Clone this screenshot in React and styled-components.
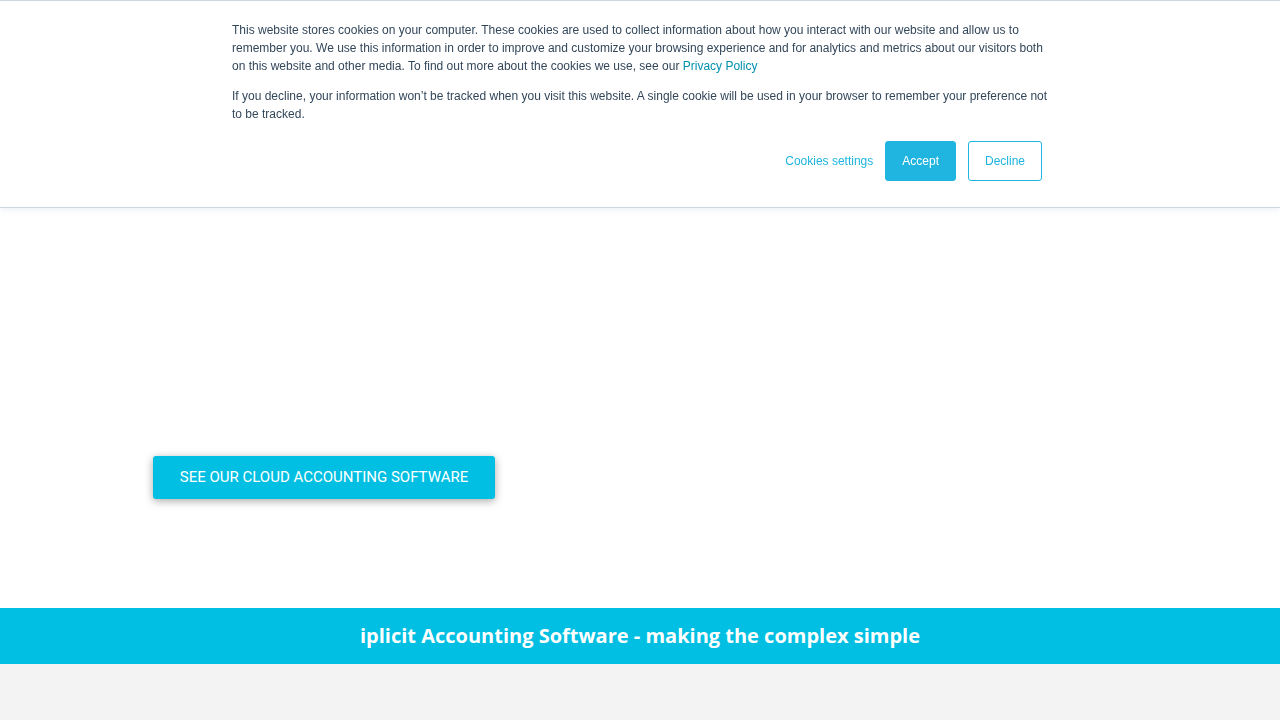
import React from 'react';
import styled, { createGlobalStyle } from 'styled-components';

const Global = createGlobalStyle`
    html, body {
        margin:0;
        padding:0;
        background:#f3f3f3;
    }
    * { box-sizing:border-box; }
`;

const Page = styled.div`
    width:100%;
    min-height:720px;
    background:#f3f3f3;
`;

const Hero = styled.section`
    height:608px;
    background:#fff;
    display:flex;
    align-items:flex-end;
    padding:0 0 109px 153px;
`;

const HeroButton = styled.a`
    display:inline-flex;
    align-items:center;
    justify-content:center;
    width:342px;
    height:43px;
    padding:0 0 1px;
    background:#00bfe2;
    color:#fff;
    font-family:Roboto, "Liberation Sans", sans-serif;
    font-weight:400;
    font-size:15px;
    text-transform:uppercase;
    text-decoration:none;
    border-radius:3px;
    box-shadow:0 2px 8px rgba(0,0,0,0.35);
`;

const Band = styled.div`
    height:56px;
    background:#00bfe2;
    display:flex;
    align-items:center;
    justify-content:center;
    padding-bottom:2px;
    color:#fff;
    font-family:"Open Sans", sans-serif;
    font-weight:700;
    font-size:20px;
`;

const Banner = styled.div`
    position:fixed;
    top:0;
    left:0;
    right:0;
    height:208px;
    background:#fff;
    border-top:1px solid #cbd6e2;
    border-bottom:1px solid #cbd6e2;
    box-shadow:0 2px 6px rgba(203,214,226,0.35);
    padding:20px 0 0;
    font-family:"Liberation Sans", Arial, sans-serif;
    font-size:12px;
    line-height:18px;
    color:#33475b;
`;

const Inner = styled.div`
    width:816px;
    margin:0 auto;
`;

const Text = styled.p`
    margin:0 0 12px;
`;

const PolicyLink = styled.a`
    color:#0091ae;
    text-decoration:none;
`;

const Actions = styled.div`
    display:flex;
    justify-content:flex-end;
    align-items:center;
    gap:12px;
    margin-top:18px;
    padding-right:6px;
`;

const TextButton = styled.a`
    color:#1fb5e0;
    text-decoration:none;
`;

const Button = styled.button`
    height:40px;
    padding:0 16px;
    font-family:"Liberation Sans", Arial, sans-serif;
    font-size:12px;
    border-radius:3px;
    border:1px solid #1fb5e0;
    background:${p => (p.$filled ? '#1fb5e0' : '#fff')};
    color:${p => (p.$filled ? '#fff' : '#1fb5e0')};
    cursor:pointer;
`;

const App = () => {
    return (
        <Page>
            <Global />
            <Hero>
                <HeroButton href="#">See our cloud accounting software</HeroButton>
            </Hero>
            <Band>iplicit Accounting Software - making the complex simple</Band>
            <Banner>
                <Inner>
                    <Text>
                        This website stores cookies on your computer. These cookies are used to collect information about how you interact with our website and allow us to remember you. We use this information in order to improve and customize your browsing experience and for analytics and metrics about our visitors both on this website and other media. To find out more about the cookies we use, see our <PolicyLink href="#">Privacy Policy</PolicyLink>
                    </Text>
                    <Text>
                        If you decline, your information won’t be tracked when you visit this website. A single cookie will be used in your browser to remember your preference not to be tracked.
                    </Text>
                    <Actions>
                        <TextButton href="#">Cookies settings</TextButton>
                        <Button $filled>Accept</Button>
                        <Button>Decline</Button>
                    </Actions>
                </Inner>
            </Banner>
        </Page>
    );
};

export default App;
